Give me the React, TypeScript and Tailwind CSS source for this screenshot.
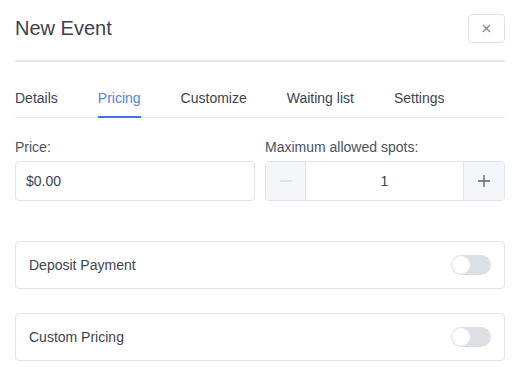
import React from "react";

function Toggle() {
  return (
    <div className="w-[40px] h-[20px] rounded-full bg-[#dcdfe6] p-[1px] flex items-center">
      <div className="w-[18px] h-[18px] rounded-full bg-white" />
    </div>
  );
}

export default function App() {
  const tabs = ["Details", "Pricing", "Customize", "Waiting list", "Settings"];
  return (
    <div
      className="w-[517px] h-[382px] bg-white pl-[15px] pr-[12px] text-[#3c4350] overflow-hidden"
      style={{ fontFamily: '"Liberation Sans", Arial, sans-serif' }}
    >
      <div className="pt-[14px] flex items-center justify-between">
        <div className="text-[20px] leading-[29px] text-[#3a4150]">New Event</div>
        <button className="w-[37px] h-[29px] border border-[#dfe2e8] rounded-[4px] flex items-center justify-center">
          <svg width="9" height="9" viewBox="0 0 9 9">
            <path d="M1 1L8 8M8 1L1 8" stroke="#7f8aa3" strokeWidth="1.4" />
          </svg>
        </button>
      </div>
      <div className="mt-[17px] h-[2px] bg-[#e3e7ed]" />
      <div className="mt-[26px] flex gap-[40px] border-b border-[#e5e8ee]">
        {tabs.map((t) => (
          <div
            key={t}
            className={
              "text-[14px] leading-[20px] pb-[8px] -mb-px border-b-2 " +
              (t === "Pricing"
                ? "border-[#3d74e6] text-[#4f84ea]"
                : "border-transparent text-[#3c4350]")
            }
          >
            {t}
          </div>
        ))}
      </div>
      <div className="mt-[19px] grid grid-cols-2 gap-[10px]">
        <div>
          <div className="text-[14px] leading-[20px] text-[#4a5160]">Price:</div>
          <div className="mt-[4px] h-[40px] border border-[#e0e3e9] rounded-[4px] flex items-center pl-[10px] text-[14px]">
            $0.00
          </div>
        </div>
        <div>
          <div className="text-[14px] leading-[20px] text-[#4a5160]">Maximum allowed spots:</div>
          <div className="mt-[4px] h-[40px] border border-[#e0e3e9] rounded-[4px] flex overflow-hidden">
            <div className="w-[40px] bg-[#f4f6f9] border-r border-[#e0e3e9] flex items-center justify-center">
              <svg width="12" height="2" viewBox="0 0 12 2">
                <path d="M0 1H12" stroke="#c9ced8" strokeWidth="1" />
              </svg>
            </div>
            <div className="flex-1 flex items-center justify-center text-[14px]">1</div>
            <div className="w-[41px] bg-[#f4f6f9] border-l border-[#e0e3e9] flex items-center justify-center">
              <svg width="12" height="12" viewBox="0 0 12 12">
                <path d="M0 6H12M6 0V12" stroke="#5a6272" strokeWidth="1.3" />
              </svg>
            </div>
          </div>
        </div>
      </div>
      <div className="mt-[40px] h-[48px] border border-[#e0e3e9] rounded-[4px] flex items-center justify-between px-[13px]">
        <span className="text-[14px]">Deposit Payment</span>
        <Toggle />
      </div>
      <div className="mt-[24px] h-[48px] border border-[#e0e3e9] rounded-[4px] flex items-center justify-between px-[13px]">
        <span className="text-[14px]">Custom Pricing</span>
        <Toggle />
      </div>
    </div>
  );
}
